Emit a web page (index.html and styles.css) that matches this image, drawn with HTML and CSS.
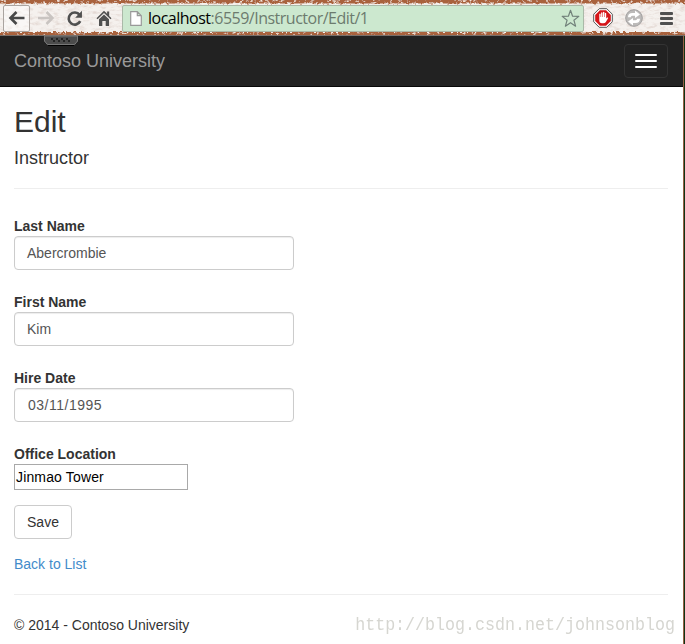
FILE: index.html
```html
<!DOCTYPE html>
<html lang="en">
<head>
<meta charset="utf-8">
<title>Edit - Contoso University</title>
<link rel="stylesheet" href="styles.css">
</head>
<body>
<div class="window">
<header class="toolbar">
  <svg class="texture" width="685" height="36" aria-hidden="true">
    <defs>
      <filter id="grain" x="0" y="0" width="100%" height="100%">
        <feTurbulence type="fractalNoise" baseFrequency="0.15 0.35" numOctaves="3" seed="4"/>
        <feColorMatrix values="0 0 0 0 .75  0 0 0 0 .66  0 0 0 0 .62  2.2 0 0 0 -1"/>
      </filter>
      <filter id="rough" x="0" y="-20%" width="100%" height="140%">
        <feTurbulence type="fractalNoise" baseFrequency="0.3 0.4" numOctaves="3" seed="8" result="n"/>
        <feDisplacementMap in="SourceGraphic" in2="n" scale="4" result="d"/>
        <feColorMatrix in="n" values="0 0 0 0 .93  0 0 0 0 .80  0 0 0 0 .70  4 0 0 0 -2.3" result="s"/>
        <feComposite in="s" in2="d" operator="in" result="c"/>
        <feMerge><feMergeNode in="d"/><feMergeNode in="c"/></feMerge>
      </filter>
    </defs>
    <rect width="685" height="36" fill="#f5f1ee"/>
    <rect width="685" height="36" filter="url(#grain)"/>
    <g filter="url(#rough)">
      <rect x="-5" y="-4" width="700" height="7.500" fill="#a9623c"/>
      <rect x="-5" y="32" width="700" height="4" fill="#a9623c"/>
    </g>
    <rect y="35" width="685" height="1" fill="#78706b"/>
  </svg>
  <button class="back" aria-label="Back"><svg width="18" height="16" viewBox="0 0 18 16"><path d="M16.500 8H3.500M8.500 2L2.500 8l6 6" fill="none" stroke="#484848" stroke-width="2.600"/></svg></button>
  <svg class="forward" width="18" height="16" viewBox="0 0 18 16"><path d="M1 8h13M9.500 2l6 6-6 6" fill="none" stroke="#c9c4c1" stroke-width="2.500"/></svg>
  <svg class="reload" width="17" height="17" viewBox="0 0 16 16"><path d="M12.800 4.600A5.700 5.700 0 1 0 13.400 10.500" fill="none" stroke="#505050" stroke-width="2.500"/><path d="M15 .8v6.400H8.600z" fill="#505050"/></svg>
  <svg class="home" width="16" height="16" viewBox="0 0 16 16"><path d="M8 .7L.5 8.200l1 1L8 3l6.500 6.200 1-1-2.300-2.300V1.500h-2.100v2.300zM3 9.300L8 4.600l5 4.700V16H9.700v-5H6.300v5H3z" fill="#505050"/></svg>
  <div class="address">
    <svg width="12" height="15" viewBox="0 0 12 15"><path d="M.7.7h6.600l4 4v9.600H.7zM7.300.7v4h4" fill="#fff" stroke="#999" stroke-width="1.200"/></svg>
    <span class="url"><span class="host">localhost</span>:6559/Instructor/Edit/1</span>
    <svg class="star" width="19" height="19" viewBox="0 0 19 19"><path d="M9.500 1.300l2.100 5.900 6.200.2-4.900 3.800 1.700 6-5.100-3.500-5.100 3.500 1.700-6L1.200 7.400l6.200-.2z" fill="none" stroke="#71817a" stroke-width="1.200" stroke-linejoin="round"/></svg>
  </div>
  <svg class="blocker" width="20" height="20" viewBox="0 0 20 20"><path d="M6.200.7h7.600l5.500 5.500v7.600l-5.500 5.500H6.200L.7 13.800V6.200z" fill="#fff" stroke="#555" stroke-width="1"/><path d="M6.900 2.200h6.200l4.700 4.700v6.200l-4.700 4.700H6.900l-4.700-4.700V6.900z" fill="#d51519"/><path d="M6.300 6q.7-.8 1.300 0v3h.5V4.700q.7-.8 1.400 0V9h.5V4.200q.7-.8 1.400 0V9h.5V5.200q.7-.7 1.300 0v5.300l1-1q1-.3 1 .5l-2.500 4.200q-.8 1-2.500 1H9q-2.700-.2-2.700-3z" fill="#fff"/></svg>
  <svg class="sync" width="18" height="18" viewBox="0 0 18 18"><circle cx="9" cy="9" r="8.300" fill="#bcbab9" stroke="#a09e9e"/><path d="M3 8.200q0-4.200 4.500-4.200H10V1.500L15 5.500 10 9V6.800H7.500Q6 6.800 5.800 8.200zM15 9.800q0 4.200-4.500 4.200H8v2.500L3 12.500 8 9v2.200h2.500q1.500 0 1.700-1.400z" fill="#fff"/></svg>
  <svg class="menu" width="13" height="13" viewBox="0 0 13 13"><path d="M1 1.500h11M1 6.500h11M1 11.500h11" stroke="#505050" stroke-width="2.800" stroke-linecap="round"/></svg>
</header>
<div class="page">
  <nav class="navbar">
    <svg class="grip" width="34" height="10" viewBox="0 0 34 10"><path d="M.5 0v5q0 1 1.500 1.500Q2.500 8.500 4 8.500h26q1.500 0 2-2 1.500-.5 1.500-1.500V0z" fill="#4c4c4c" stroke="#777"/><path d="M7 3h2m3 0h2m3 0h2m3 0h2M9 5h2m3 0h2m3 0h2m3 0h2" stroke="#171717" stroke-width="1.300"/><path d="M4 9.500h26" stroke="#000"/></svg>
    <a class="brand">Contoso University</a>
    <button class="toggle" aria-label="Toggle navigation"><i></i><i></i><i></i></button>
  </nav>
  <main>
    <h2>Edit</h2>
    <h4>Instructor</h4>
    <hr>
    <form>
      <label>Last Name</label><div class="field">Abercrombie</div>
      <label>First Name</label><div class="field">Kim</div>
      <label>Hire Date</label><div class="field date">03/11/1995</div>
      <label>Office Location</label><div class="plain">Jinmao Tower</div>
      <button class="save" type="button">Save</button>
    </form>
    <a class="link">Back to List</a>
    <hr class="end">
    <footer><span>© 2014 - Contoso University</span><span class="mark">http://blog.csdn.net/johnsonblog</span></footer>
  </main>
</div>
</div>
</body>
</html>
```
FILE: styles.css
```css
* { box-sizing: border-box; }
body { margin: 0; font: 14px/20px "Liberation Sans", Arial, sans-serif; color: #333; background: #fff; }
.window { width: 685px; height: 644px; overflow: hidden; }
button { font: inherit; padding: 0; }
svg { display: block; flex: none; }
.toolbar { position: relative; height: 36px; display: flex; align-items: center; }
.toolbar > :not(.texture) { position: relative; }
.texture { position: absolute; left: 0; top: 0; }
.back { width: 27px; height: 27px; margin-left: 3px; display: grid; place-items: center; border: 1px solid #aaa4a0; border-radius: 2px; background: rgba(255,255,255,.45); }
.forward { margin-left: 7px; }
.reload { margin-left: 11px; }
.home { margin-left: 13px; }
.address { margin-left: 10px; width: 462px; height: 27px; display: flex; align-items: center; padding: 0 3px 0 7px; background: #cce8cf; border: 1px solid #aab9a8; border-radius: 2px; }
.url { margin-left: 6px; font: 16px/24px "Open Sans", "Noto Sans", sans-serif; letter-spacing: -.5px; color: #6c7b6e; white-space: nowrap; }
.host { color: #000; }
.star { margin-left: auto; }
.blocker { margin-left: 9px; }
.sync { margin-left: 12px; }
.menu { margin-left: 17px; }
.page { height: 608px; border-right: 1px solid #123313; box-shadow: inset -1px 0 #956044; }
.navbar { position: relative; width: 683px; height: 51px; padding: 0 15px 0 14px; display: flex; align-items: center; justify-content: space-between; background: #222; border-bottom: 1px solid #080808; }
.brand { color: #999; font-size: 18px; }
.grip { position: absolute; left: 44px; top: 0; }
.toggle { width: 44px; height: 34px; border: 1px solid #333; border-radius: 4px; background: transparent; display: flex; flex-direction: column; align-items: center; justify-content: center; gap: 4px; }
.toggle i { width: 22px; height: 2px; border-radius: 1px; background: #fff; }
main { padding: 18px 16px 0 14px; }
h2 { margin: 0; font-size: 30px; line-height: 33px; font-weight: 500; }
h4 { margin: 10px 0 0; font-size: 18px; line-height: 20px; font-weight: 500; }
hr { margin: 20px 0 27px; border: 0; border-top: 1px solid #eee; }
label { display: block; font-weight: 700; }
.field { width: 280px; height: 34px; margin-bottom: 22px; padding: 6px 12px; border: 1px solid #ccc; border-radius: 4px; color: #555; box-shadow: inset 0 1px 1px rgba(0,0,0,.075); }
.date { padding-left: 13px; letter-spacing: .5px; }
.plain { width: 174px; height: 26px; padding: 2px 1px; border: 1px solid #a9a9a9; color: #000; letter-spacing: .15px; }
.save { display: block; width: 58px; height: 34px; margin-top: 15px; border: 1px solid #ccc; border-radius: 4px; background: #fff; color: #333; }
.link { display: block; margin-top: 15px; color: #428bca; }
.end { margin: 20px 0; }
footer { display: flex; align-items: center; height: 20px; white-space: nowrap; }
.mark { margin-left: auto; margin-right: -7px; font: 16.66px/20px "Liberation Mono", monospace; color: #d6d6d1; transform: scaleY(1.15); }
```
